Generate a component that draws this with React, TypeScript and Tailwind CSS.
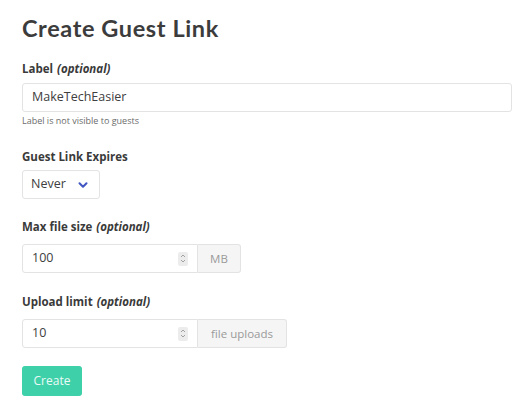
import { ChevronDown } from "lucide-react";

const Spin = () => (
  <div className="flex h-[14px] w-[10px] flex-col items-center justify-center rounded-[2px] bg-[#ececec]">
    <svg width="6" height="11" viewBox="0 0 6 11" fill="none" stroke="#9a9a9a" strokeWidth="0.9">
      <path d="M1 4 L3 2 L5 4" />
      <path d="M1 7 L3 9 L5 7" />
    </svg>
  </div>
);

const FieldLabel = ({ text, optional }: { text: string; optional?: boolean }) => (
  <div className="text-[11.5px] font-bold leading-4 text-[#3a3a3a]">
    {text}
    {optional && <em className="ml-1 italic">(optional)</em>}
  </div>
);

const NumberField = ({ value, unit, unitWidth }: { value: string; unit: string; unitWidth: string }) => (
  <div className="flex h-[29px]">
    <div className="flex w-[176px] items-center justify-between rounded-l-[3px] border border-[#e3e3e3] bg-white pl-[9px] pr-[9px] text-[12.5px] text-[#404040]">
      <span>{value}</span>
      <Spin />
    </div>
    <div
      className={`flex items-center justify-center rounded-r-[3px] border border-l-0 border-[#e3e3e3] bg-[#f5f5f5] text-[11.5px] text-[#9a9a9a] ${unitWidth}`}
    >
      {unit}
    </div>
  </div>
);

export default function App() {
  return (
    <div className="min-h-[406px] bg-white pl-[22px] pr-[19px] pt-[12px] font-['Open_Sans',sans-serif] text-[#404040]">
      <h1 className="font-['Lato',sans-serif] text-[23.5px] font-bold leading-8 tracking-[0.6px] text-[#3c3c3c]">
        Create Guest Link
      </h1>

      <div className="mt-[17px]">
        <FieldLabel text="Label" optional />
        <div className="mt-[6px] flex h-[29px] items-center rounded-[3px] border border-[#e3e3e3] px-[9px] text-[12.5px]">
          MakeTechEasier
        </div>
        <div className="mt-[3px] text-[9px] leading-3 text-[#6b6b6b]">Label is not visible to guests</div>
      </div>

      <div className="mt-[22px]">
        <FieldLabel text="Guest Link Expires" />
        <div className="mt-[5px] flex h-[29px] w-[78px] items-center justify-between rounded-[3px] border border-[#e3e3e3] pl-[8px] pr-[9px] text-[12.5px]">
          <span>Never</span>
          <ChevronDown className="h-[14px] w-[14px] text-[#4257c2]" strokeWidth={3.5} />
        </div>
      </div>

      <div className="mt-[20px]">
        <FieldLabel text="Max file size" optional />
        <div className="mt-[9px]">
          <NumberField value="100" unit="MB" unitWidth="w-[43px]" />
        </div>
      </div>

      <div className="mt-[21px]">
        <FieldLabel text="Upload limit" optional />
        <div className="mt-[9px]">
          <NumberField value="10" unit="file uploads" unitWidth="w-[89px]" />
        </div>
      </div>

      <button className="mt-[18px] h-[30px] w-[60px] rounded-[3px] bg-[#3dd0a9] text-[12px] text-white/90">
        Create
      </button>
    </div>
  );
}
